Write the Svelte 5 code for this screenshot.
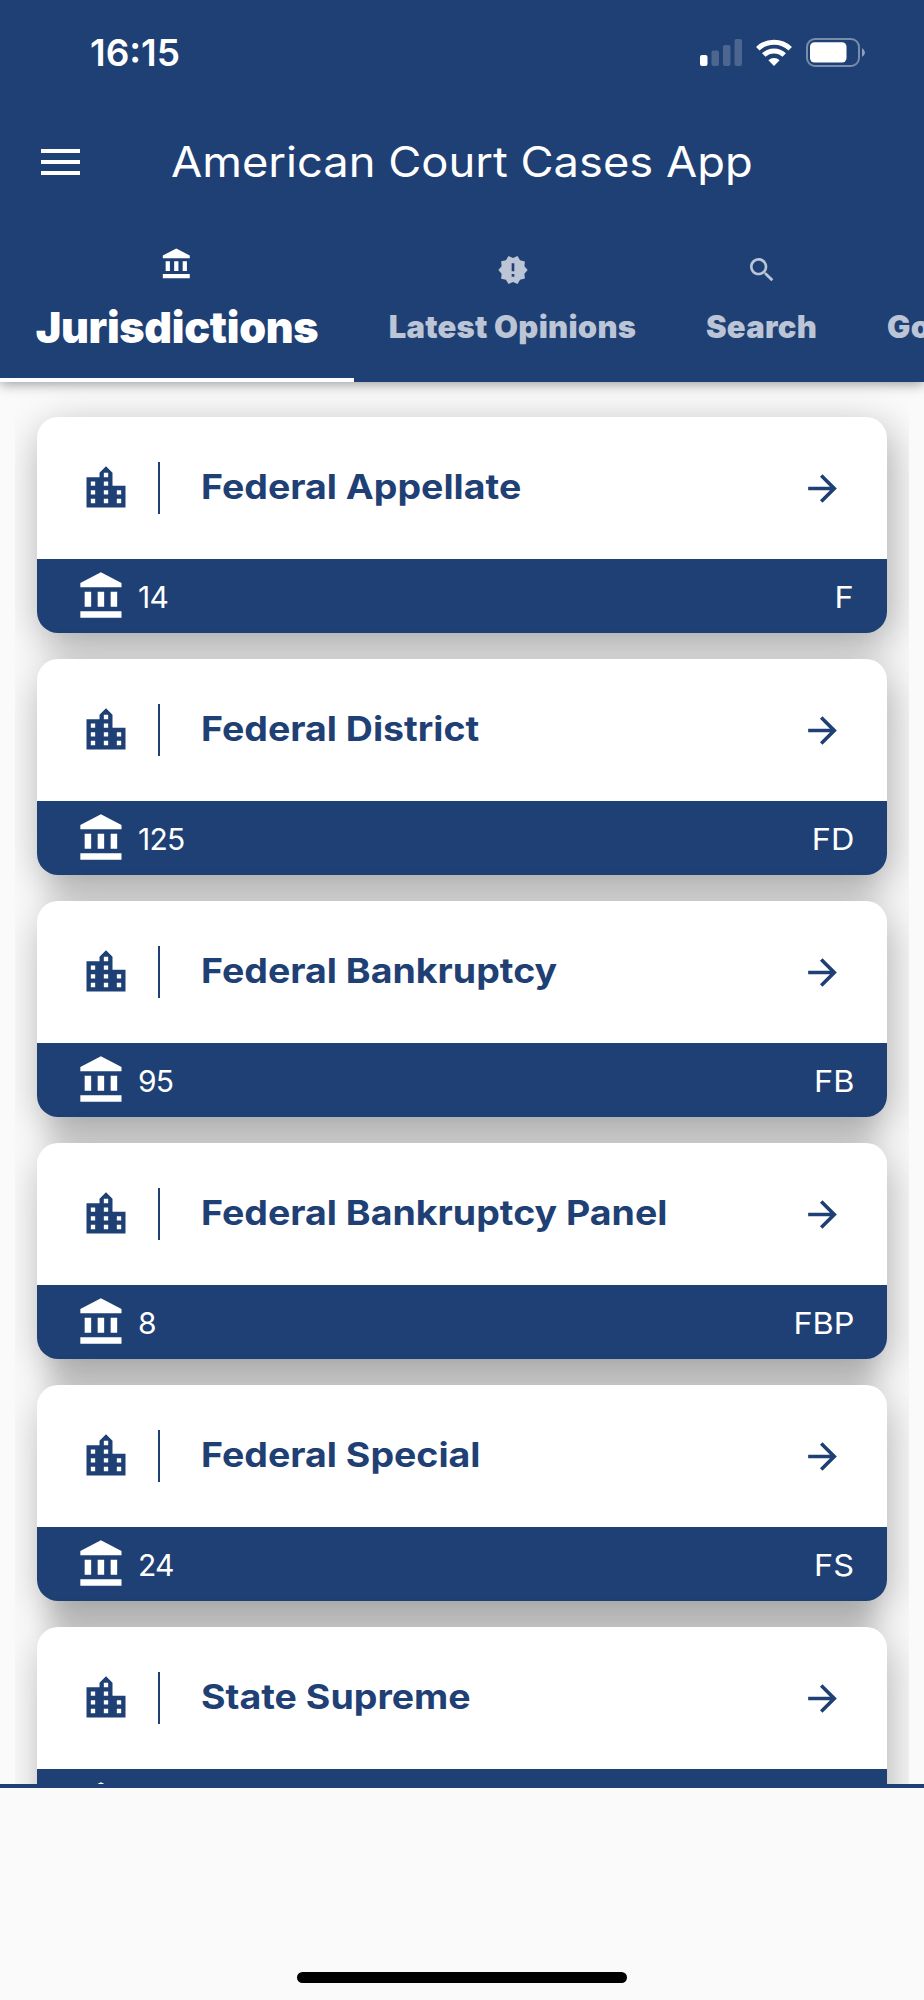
<script>
  const tabs = [
    { name: 'Jurisdictions', icon: 'bank', active: true },
    { name: 'Latest Opinions', icon: 'badge' },
    { name: 'Search', icon: 'search' },
    { name: 'Go', icon: '' }
  ];

  // depth darkens the gap under a card, it builds up down the list
  const courts = [
    { name: 'Federal Appellate', count: 14, code: 'F', depth: 0.02 },
    { name: 'Federal District', count: 125, code: 'FD', depth: 0.06 },
    { name: 'Federal Bankruptcy', count: 95, code: 'FB', depth: 0.09 },
    { name: 'Federal Bankruptcy Panel', count: 8, code: 'FBP', depth: 0.12 },
    { name: 'Federal Special', count: 24, code: 'FS', depth: 0.14 },
    { name: 'State Supreme', count: '', code: '', depth: 0.14 }
  ];

  const icons = {
    bank: 'M4 10v7h3v-7H4zm6 0v7h3v-7h-3zM2 22h19v-3H2v3zm14-12v7h3v-7h-3zM11.5 1L2 6v2h19V6l-9.5-5z',
    badge: 'M23 12l-2.44-2.78.34-3.68-3.61-.82-1.89-3.18L12 3 8.6 1.54 6.71 4.72l-3.61.81.34 3.68L1 12l2.44 2.78-.34 3.69 3.61.82 1.89 3.18L12 21l3.4 1.46 1.89-3.18 3.61-.82-.34-3.68L23 12zm-10 5h-2v-2h2v2zm0-4h-2V7h2v6z',
    search: 'M15.5 14h-.79l-.28-.27C15.41 12.59 16 11.11 16 9.5 16 5.91 13.09 3 9.5 3S3 5.91 3 9.5 5.91 16 9.5 16c1.61 0 3.09-.59 4.23-1.57l.27.28v.79l5 4.99L20.49 19l-4.99-5zm-6 0C7.01 14 5 11.99 5 9.5S7.01 5 9.5 5 14 7.01 14 9.5 11.99 14 9.5 14z',
    city: 'M15 11V5l-3-3-3 3v2H3v14h18V11h-6zm-8 8H5v-2h2v2zm0-4H5v-2h2v2zm0-4H5V9h2v2zm6 8h-2v-2h2v2zm0-4h-2v-2h2v2zm0-4h-2V9h2v2zm0-4h-2V5h2v2zm6 12h-2v-2h2v2zm0-4h-2v-2h2v2z',
    arrow: 'M12 4l-1.41 1.41L16.17 11H4v2h12.17l-5.58 5.59L12 20l8-8z'
  };
</script>

<div class="phone">
  <header>
    <div class="status">
      <span class="time">16:15</span>
      <div class="status-icons">
        <svg width="42" height="27" viewBox="0 0 42 27" fill="#fff">
          <rect x="0" y="16" width="7.5" height="11" rx="2" />
          <g opacity=".2">
            <rect x="11.5" y="11.5" width="7.5" height="15.5" rx="2" />
            <rect x="23" y="6" width="7.5" height="21" rx="2" />
            <rect x="34.5" y="0" width="7.5" height="27" rx="2" />
          </g>
        </svg>
        <svg class="wifi" width="36" height="27" viewBox="0 0 36 27">
          <g fill="none" stroke="#fff" stroke-width="5">
            <path d="M1.8 9.7a23.4 23.4 0 0 1 32.4 0" />
            <path d="M7.8 16a14.8 14.8 0 0 1 20.4 0" />
          </g>
          <path fill="#fff" d="M12.4 21.2a8.3 8.3 0 0 1 11.2 0L18 27z" />
        </svg>
        <svg width="60" height="29" viewBox="0 0 60 29">
          <rect x="1" y="1" width="52" height="27" rx="8" fill="none" stroke="#fff" stroke-opacity=".4" stroke-width="2" />
          <rect x="4" y="4.3" width="36.5" height="20.2" rx="4.5" fill="#fff" />
          <path d="M56 10q6 4.500 0 9z" fill="#fff" opacity=".5" />
        </svg>
      </div>
    </div>

    <div class="app-bar">
      <button class="menu" aria-label="Menu"><i></i><i></i><i></i></button>
      <h1>American Court Cases App</h1>
    </div>

    <nav>
      {#each tabs as tab}
        <div class="tab" class:active={tab.active}>
          <svg viewBox="0 0 24 24" fill="currentColor"><path d={icons[tab.icon]} /></svg>
          <span>{tab.name}</span>
        </div>
      {/each}
    </nav>
  </header>

  <main>
    <div class="list">
      {#each courts as court}
        <article class="card" style="--depth: {court.depth}">
          <div class="card-top">
            <svg class="city" viewBox="0 0 24 24"><path d={icons.city} /></svg>
            <h2><span>{court.name}</span></h2>
            <svg class="arrow" viewBox="0 0 24 24"><path d={icons.arrow} /></svg>
          </div>
          <div class="card-bottom">
            <svg viewBox="0 0 24 24"><path d={icons.bank} /></svg>
            <span>{court.count}</span>
            <span class="code">{court.code}</span>
          </div>
        </article>
      {/each}
    </div>
  </main>

  <footer>
    <div class="home-bar"></div>
  </footer>
</div>

<style>
  :global(body) {
    margin: 0;
    background: #fafafa;
  }
  .phone {
    display: flex;
    flex-direction: column;
    width: 924px;
    height: 2000px;
    overflow: hidden;
    background: #fafafa;
    font-family: Inter, "Liberation Sans", sans-serif;
  }
  header {
    position: relative;
    z-index: 1;
    height: 382px;
    flex: none;
    background: #1f4074;
    color: #fff;
    box-shadow: 0 2px 12px rgba(0, 0, 0, .4);
  }

  /* status bar */
  .status {
    display: flex;
    justify-content: space-between;
    height: 106px;
    box-sizing: border-box;
    padding: 38px 58px 0 90px;
  }
  .time {
    font-size: 37px;
    line-height: 30px;
    font-weight: 600;
  }
  .status-icons {
    display: flex;
    gap: 14px;
  }
  .status-icons svg {
    margin-top: 1px;
  }
  .status-icons svg:last-child {
    margin-top: 0;
  }

  .app-bar {
    display: flex;
    align-items: center;
    height: 112px;
    padding-left: 41px;
  }
  .menu {
    display: flex;
    flex-direction: column;
    gap: 6.500px;
    width: 39px;
    padding: 0;
    border: none;
    background: none;
  }
  .menu i {
    height: 4.500px;
    background: #fff;
  }
  h1 {
    margin: 0 0 2px 91px;
    font-size: 42px;
    font-weight: 400;
    white-space: nowrap;
    transform: scaleX(1.078);
    transform-origin: left;
  }

  /* tabs */
  nav {
    display: flex;
    height: 164px;
  }
  .tab {
    display: flex;
    flex-direction: column;
    align-items: center;
    flex: none;
    box-sizing: border-box;
    width: 317px;
    padding-top: 36px;
    color: #bbc5d5;
    font-size: 31px;
    line-height: 40px;
    font-weight: 900;
    letter-spacing: .25px;
    white-space: nowrap;
  }
  .tab:nth-child(3) {
    width: 181px;
  }
  .tab:nth-child(4) {
    width: 120px;
    align-items: flex-start;
    padding-left: 35px;
  }
  .tab svg {
    width: 32px;
    height: 32px;
    margin-bottom: 21px;
  }
  .tab.active {
    width: 354px;
    padding-top: 29px;
    border-bottom: 4px solid #fff;
    color: #fff;
    font-size: 43px;
    letter-spacing: -.3px;
  }
  .tab.active svg {
    width: 34px;
    height: 34px;
    margin-bottom: 26px;
  }

  /* court cards */
  main {
    height: 1402px;
    flex: none;
    overflow: hidden;
    border-bottom: 4px solid #1f4074;
  }
  .list {
    display: flex;
    flex-direction: column;
    gap: 26px;
    margin: 0 15px;
    padding: 35px 22px 0;
    height: 1367px;
    overflow: hidden;
  }
  .card {
    flex: none;
    height: 216px;
    border-radius: 21px;
    overflow: hidden;
    background: #fff;
    box-shadow:
      4px 12px 42px rgba(0, 0, 0, calc(.34 - var(--depth) * .5)),
      0 50px 24px -14px rgba(0, 0, 0, var(--depth));
  }
  .card-top {
    display: flex;
    align-items: center;
    height: 142px;
    padding: 0 43px;
    color: #1f4074;
  }
  .card svg {
    flex: none;
    fill: currentColor;
  }
  .city {
    width: 52px;
    height: 52px;
  }
  .card h2 {
    display: flex;
    align-items: center;
    flex: 1;
    height: 48px;
    margin: 0 0 0 26px;
    padding: 0 0 4px 41px;
    border-left: 2px solid #1f4074;
    font-size: 34px;
    font-weight: 700;
  }
  .card h2 span {
    transform: scaleX(1.103);
    transform-origin: left;
  }
  .arrow {
    width: 43px;
    height: 43px;
  }
  .card-bottom {
    display: flex;
    align-items: center;
    height: 74px;
    padding: 0 33px 0 39px;
    background: #1f4074;
    color: #fff;
    font-size: 30px;
    font-weight: 400;
  }
  .card-bottom svg {
    width: 52px;
    height: 52px;
    margin-right: 10px;
  }
  .card-bottom span {
    padding-top: 2px;
    letter-spacing: -.8px;
  }
  .card-bottom .code {
    margin-left: auto;
    letter-spacing: 0;
    transform: scaleX(1.08);
    transform-origin: right;
  }

  footer {
    display: flex;
    flex: 1;
    justify-content: center;
    align-items: flex-end;
    padding-bottom: 17px;
  }
  .home-bar {
    width: 330px;
    height: 11px;
    border-radius: 6px;
    background: #000;
  }
</style>
